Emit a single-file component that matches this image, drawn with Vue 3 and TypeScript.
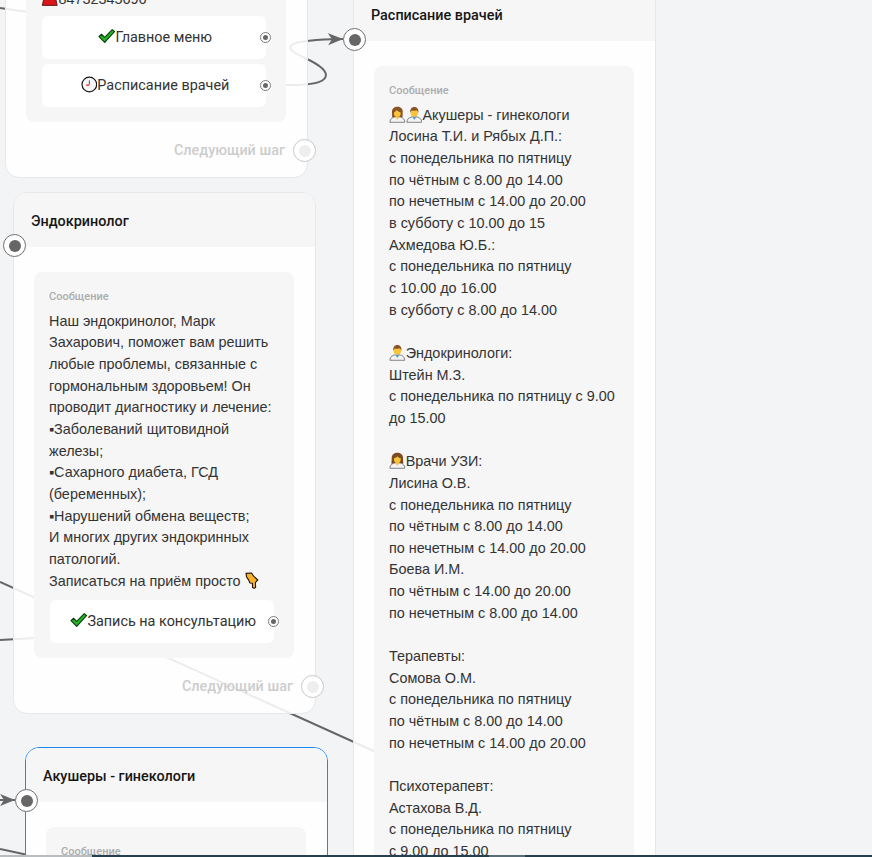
<script setup lang="ts">
type Icon = 'docA' | 'docB' | 'docC' | 'hand' | 'phone'
interface Line {
  icons?: Icon[]
  text: string
  tail?: Icon
}

const endoLines: Line[] = [
  { text: 'Наш эндокринолог, Марк Захарович, поможет вам решить любые проблемы, связанные с гормональным здоровьем! Он проводит диагностику и лечение:' },
  { text: '▪Заболеваний щитовидной железы;' },
  { text: '▪Сахарного диабета, ГСД (беременных);' },
  { text: '▪Нарушений обмена веществ;' },
  { text: 'И многих других эндокринных патологий.' },
  { text: 'Записаться на приём просто ', tail: 'hand' },
]

const scheduleLines: Line[] = [
  { icons: ['docA', 'docB'], text: 'Акушеры - гинекологи' },
  { text: 'Лосина Т.И. и Рябых Д.П.:' },
  { text: 'с понедельника по пятницу' },
  { text: 'по чётным с 8.00 до 14.00' },
  { text: 'по нечетным с 14.00 до 20.00' },
  { text: 'в субботу с 10.00 до 15' },
  { text: 'Ахмедова Ю.Б.:' },
  { text: 'с понедельника по пятницу' },
  { text: 'с 10.00 до 16.00' },
  { text: 'в субботу с 8.00 до 14.00' },
  { text: '\u00a0' },
  { icons: ['docB'], text: 'Эндокринологи:' },
  { text: 'Штейн М.З.' },
  { text: 'с понедельника по пятницу с 9.00 до 15.00' },
  { text: '\u00a0' },
  { icons: ['docC'], text: 'Врачи УЗИ:' },
  { text: 'Лисина О.В.' },
  { text: 'с понедельника по пятницу' },
  { text: 'по чётным с 8.00 до 14.00' },
  { text: 'по нечетным с 14.00 до 20.00' },
  { text: 'Боева И.М.' },
  { text: 'по чётным с 14.00 до 20.00' },
  { text: 'по нечетным с 8.00 до 14.00' },
  { text: '\u00a0' },
  { text: 'Терапевты:' },
  { text: 'Сомова О.М.' },
  { text: 'с понедельника по пятницу' },
  { text: 'по чётным с 8.00 до 14.00' },
  { text: 'по нечетным с 14.00 до 20.00' },
  { text: '\u00a0' },
  { text: 'Психотерапевт:' },
  { text: 'Астахова В.Д.' },
  { text: 'с понедельника по пятницу' },
  { text: 'с 9.00 до 15.00' },
]
</script>

<template>
  <div class="canvas">
    <svg class="defs" width="0" height="0" aria-hidden="true">
      <symbol id="check" viewBox="0 0 18 16">
        <path d="M1 8.6 3.6 6.2 6.9 9.4 14.6 1.4 17 3.4 6.9 14.6Z" fill="#22b322" stroke="#0d3d0d" stroke-width="1.1" stroke-linejoin="round" />
      </symbol>
      <symbol id="clock" viewBox="0 0 18 18">
        <circle cx="9" cy="9" r="7.9" fill="#f6f6f6" stroke="#1a1a1a" stroke-width="1.3" />
        <path d="M9 4.6V9" stroke="#444" stroke-width="1" />
        <path d="M5.6 9.6H9" stroke="#d8232a" stroke-width="1.3" />
      </symbol>
      <symbol id="phone" viewBox="0 0 16 16">
        <path d="M1 14.5 2.4 8 5 6V3.5C5 2.4 11 2.4 11 3.5V6L13.6 8 15 14.5Z" fill="#d8151b" stroke="#5a0a0c" stroke-width=".8" />
      </symbol>
      <symbol id="docA" viewBox="0 0 18 18">
        <path d="M3.4 12 3.2 5.8C3.2 2.4 5.8.6 9 .6s5.8 1.8 5.8 5.2l-.2 6.2Z" fill="#8a5326" />
        <path d="M1 17.4c0-3.8 2.8-6 8-6s8 2.2 8 6Z" fill="#f3f3f3" stroke="#5c5c5c" stroke-width=".8" />
        <path d="M6.8 11.4h4.4L9 14.8Z" fill="#f6c23e" />
        <ellipse cx="9" cy="7.6" rx="3.6" ry="4.1" fill="#f8c53a" />
        <path d="M5.2 6.8C6.6 6.2 7.8 5.2 8.2 4.2c1 1.4 2.6 2.2 4.6 2.6L13 4 9 2.4 5.2 4Z" fill="#8a5326" />
      </symbol>
      <symbol id="docB" viewBox="0 0 18 18">
        <path d="M1 17.4c0-3.8 2.8-6 8-6s8 2.2 8 6Z" fill="#f3f3f3" stroke="#5c5c5c" stroke-width=".8" />
        <path d="M6.8 11.4h4.4L9 14.8Z" fill="#4c9ad6" />
        <ellipse cx="9" cy="6.8" rx="4" ry="4.6" fill="#f8c53a" />
        <path d="M4.6 7.4C4 3 6.2.8 9 .8s5 2.2 4.4 6.6c-.4-1.4-1.2-2.6-2.2-3-1.6.7-3.6.7-4.8.2C5.4 5.2 4.9 6.2 4.6 7.4Z" fill="#8a5326" />
      </symbol>
      <symbol id="docC" viewBox="0 0 18 18">
        <path d="M2.6 12.6 3 5.6C3.2 2.4 5.8.6 9 .6s5.8 1.8 6 5l.4 7Z" fill="#7d4a22" />
        <path d="M1 17.4c0-3.8 2.8-6 8-6s8 2.2 8 6Z" fill="#f3f3f3" stroke="#5c5c5c" stroke-width=".8" />
        <path d="M6.8 11.4h4.4L9 14.8Z" fill="#f6c23e" />
        <ellipse cx="9" cy="7.4" rx="3.7" ry="4.2" fill="#f8c53a" />
        <path d="M5.2 6.6C7 6.2 8.4 5.4 9 4.4c.8 1.2 2 1.9 3.8 2.2L12.8 4 9 2.6 5.2 4Z" fill="#7d4a22" />
      </symbol>
      <symbol id="hand" viewBox="0 0 14 17">
        <path d="M1 1.4 6.6 1 8.6 4.2 12.8 8 11.6 9.2 10.4 10.6 10.6 15.4 9 16.2 7.6 15.4 7.4 11.2 5 11 3.4 7.6 1.6 5Z" fill="#fbb12c" stroke="#1d1405" stroke-width="1.1" stroke-linejoin="round" />
      </symbol>
      <marker id="arrow" viewBox="0 0 16 14" markerWidth="16" markerHeight="14" markerUnits="userSpaceOnUse" refX="15" refY="7" orient="auto">
        <path d="M0 1 15 7 0 13 4 7Z" fill="#666" />
      </marker>
    </svg>

    <svg class="wires" width="872" height="857" aria-hidden="true">
      <path d="M0 8C8 9 18 11 30 12" />
      <path d="M286 85C336 86 335 72 305 58 278 46 286 40 343 39" marker-end="url(#arrow)" />
      <path d="M0 582 376 752" />
      <path d="M0 640 36 638" />
      <path d="M0 849 28 855" />
      <path d="M0 800H15" marker-end="url(#arrow)" />
    </svg>

    <section class="node node-main">
      <div class="node-body">
        <div class="message">
          <div class="line phone-line"><svg class="emoji phone"><use href="#phone" /></svg>84732345696</div>
          <div class="option">
            <svg class="emoji check"><use href="#check" /></svg>Главное меню
            <span class="option-port"></span>
          </div>
          <div class="option">
            <svg class="emoji"><use href="#clock" /></svg>Расписание врачей
            <span class="option-port"></span>
          </div>
        </div>
      </div>
      <div class="next-step">Следующий шаг<span class="next-port"><i></i></span></div>
    </section>

    <section class="node node-endo">
      <span class="in-port"><i></i></span>
      <header class="node-head">Эндокринолог</header>
      <div class="node-body">
        <div class="message">
          <div class="message-label">Сообщение</div>
          <div v-for="(line, i) in endoLines" :key="i" class="line">
            {{ line.text }}<svg v-if="line.tail" class="emoji tail"><use :href="`#${line.tail}`" /></svg>
          </div>
          <div class="option option-book">
            <svg class="emoji check"><use href="#check" /></svg>Запись на консультацию
            <span class="option-port"></span>
          </div>
        </div>
      </div>
      <div class="next-step">Следующий шаг<span class="next-port"><i></i></span></div>
    </section>

    <section class="node node-obgyn">
      <span class="in-port"><i></i></span>
      <header class="node-head">Акушеры - гинекологи</header>
      <div class="node-body">
        <div class="message">
          <div class="message-label">Сообщение</div>
        </div>
      </div>
    </section>

    <section class="node node-schedule">
      <span class="in-port"><i></i></span>
      <header class="node-head">Расписание врачей</header>
      <div class="node-body">
        <div class="message">
          <div class="message-label">Сообщение</div>
          <div v-for="(line, i) in scheduleLines" :key="i" class="line">
            <svg v-for="icon in line.icons" :key="icon" class="emoji"><use :href="`#${icon}`" /></svg>{{ line.text }}
          </div>
        </div>
      </div>
    </section>

    <div class="bottom-bar">
      <span class="bar-gray"></span>
      <span class="bar-dark"></span>
      <span class="bar-thumb"></span>
      <span class="bar-dark bar-rest"></span>
    </div>
  </div>
</template>

<style scoped>
.canvas {
  position: relative;
  width: 872px;
  height: 857px;
  overflow: hidden;
  background: #f3f4f6;
  font-family: Roboto, "Liberation Sans", sans-serif;
  color: #333;
}
.defs {
  position: absolute;
}
.wires {
  position: absolute;
  left: 0;
  top: 0;
}
.wires path {
  fill: none;
  stroke: #666;
  stroke-width: 2;
}
.wires marker path {
  stroke: none;
}

.node {
  position: absolute;
  box-sizing: border-box;
  width: 303px;
  background: rgba(255, 255, 255, 0.88);
  border: 1px solid #e7e8ea;
  border-radius: 14px;
}
.node-main {
  left: 5px;
  top: -60px;
  height: 238px;
}
.node-endo {
  left: 13px;
  top: 192px;
  height: 522px;
}
.node-obgyn {
  left: 25px;
  top: 747px;
  height: 300px;
  border-color: #1e88f0;
}
.node-schedule {
  left: 353px;
  top: -14px;
  height: 1000px;
}

.node-head {
  height: 54px;
  box-sizing: border-box;
  padding: 21px 17px 0;
  border-radius: 13px 13px 0 0;
  background: #f6f6f7;
  font-size: 14.4px;
  line-height: 16px;
  font-weight: 500;
  color: #161616;
}
.node-body {
  padding: 25px 21px 0 20px;
}
.node-main .node-body {
  padding-top: 0;
}
.message {
  box-sizing: border-box;
  padding: 17px 15px 15px;
  border-radius: 8px;
  background: #f6f6f7;
}
.node-main .message {
  height: 181px;
  padding-top: 0;
  padding-bottom: 15px;
  display: flex;
  flex-direction: column;
  justify-content: flex-end;
}
.message-label {
  font-size: 11px;
  line-height: 16px;
  font-weight: 500;
  color: #adadad;
  margin-bottom: 5.7px;
}
.line {
  font-family: "Liberation Sans", Arial, sans-serif;
  font-size: 14.4px;
  line-height: 21.66px;
  color: #333;
}
.phone-line {
  margin-bottom: 5px;
}
.emoji {
  display: inline-block;
  width: 16.7px;
  height: 17px;
  vertical-align: -3px;
}
.phone {
  width: 17.5px;
}
.tail {
  width: 14px;
  height: 17px;
}
.check {
  width: 17.5px;
  height: 16px;
  vertical-align: -2px;
}

.option {
  position: relative;
  height: 43px;
  margin: 0 5px 0 1px;
  padding-left: 2px;
  border-radius: 6px;
  background: #fff;
  font-size: 14.4px;
  line-height: 44px;
  text-align: center;
  color: #333;
}
.option + .option {
  margin-top: 5px;
}
.option-book {
  margin-top: 8px;
}
.option-port {
  position: absolute;
  right: -5px;
  top: 16px;
  box-sizing: border-box;
  width: 11px;
  height: 11px;
  border: 3px solid #fff;
  outline: 1px solid #7b7b7b;
  outline-offset: -1px;
  border-radius: 50%;
  background: #666;
}

.next-step {
  position: absolute;
  right: 22px;
  bottom: 17px;
  font-size: 14.4px;
  line-height: 18px;
  font-weight: 500;
  color: #cdcdcd;
}
.next-port {
  position: absolute;
  right: -31px;
  top: -3px;
  box-sizing: border-box;
  width: 23px;
  height: 23px;
  border: 1.5px solid #c8c8c8;
  border-radius: 50%;
  background: #fff;
  display: flex;
  align-items: center;
  justify-content: center;
}
.next-port i {
  width: 12px;
  height: 12px;
  border-radius: 50%;
  background: #eee;
}
.in-port {
  position: absolute;
  left: -11px;
  top: 41px;
  z-index: 1;
  box-sizing: border-box;
  width: 23px;
  height: 23px;
  border: 1.5px solid #6f6f6f;
  border-radius: 50%;
  background: #fff;
  display: flex;
  align-items: center;
  justify-content: center;
}
.in-port i {
  width: 12px;
  height: 12px;
  border-radius: 50%;
  background: #666;
}

.bottom-bar {
  position: absolute;
  left: 0;
  right: 0;
  bottom: 0;
  height: 2px;
  display: flex;
}
.bar-gray {
  width: 92px;
  background: #b9bdc0;
}
.bar-dark {
  width: 397px;
  background: #263f4c;
}
.bar-thumb {
  width: 36px;
  background: #5a6d76;
}
.bar-rest {
  flex: 1;
}
</style>
